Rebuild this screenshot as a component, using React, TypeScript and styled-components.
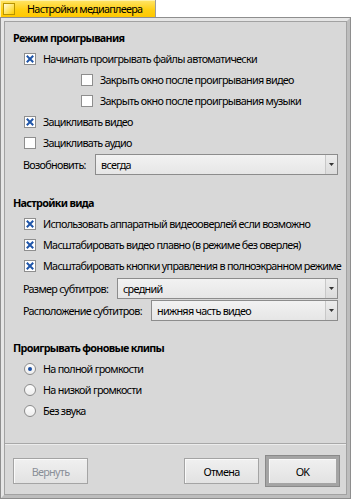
import React from 'react';
import styled, { createGlobalStyle } from 'styled-components';

const GlobalStyle = createGlobalStyle`
  html, body { margin: 0; padding: 0; background: #ffffff; }
  body { font-family: "Noto Sans", "DejaVu Sans", sans-serif; font-size: 10.8px; letter-spacing: -0.7px; color: #000; }
  * { box-sizing: border-box; }
`;

const Screen = styled.div`
  width: 351px;
  height: 499px;
  display: flex;
  flex-direction: column;
  overflow: hidden;
`;

const Tab = styled.div`
  width: 156px;
  height: 17px;
  flex: none;
  display: flex;
  align-items: center;
  gap: 12px;
  padding-left: 3px;
  background: linear-gradient(#ffe56a, #ffcf10 60%, #ffc800);
  border-right: 1px solid #9c9c9c;
  box-shadow: inset 1px 1px 0 #fff2a8;
`;

const CloseBox = styled.div`
  width: 12px;
  height: 12px;
  flex: none;
  border: 1px solid #b89400;
  background: linear-gradient(135deg, #fffbe0, #ffe66a 50%, #ffcf00);
`;

const TabTitle = styled.span`
  white-space: nowrap;
`;

const Window = styled.div`
  flex: 1;
  min-height: 0;
  min-width: 0;
  display: flex;
  border: 1px solid #8e8e8e;
`;

const Frame = styled.div`
  flex: 1;
  min-width: 0;
  display: flex;
  border-style: solid;
  border-width: 3px;
  border-color: #e6e6e6 #bdbdbd #bdbdbd #e6e6e6;
`;

const Content = styled.div`
  flex: 1;
  min-width: 0;
  display: flex;
  flex-direction: column;
  border: 1px solid #a2a2a2;
  background: #d8d8d8;
`;

const Main = styled.div`
  flex: 1;
  min-width: 0;
  display: flex;
  flex-direction: column;
  padding: 5px 8px 0 8px;
`;

const Section = styled.div<{ $top: number }>`
  display: flex;
  flex-direction: column;
  margin-top: ${(p) => p.$top}px;
`;

const Heading = styled.div`
  height: 21px;
  display: flex;
  align-items: center;
  font-weight: bold;
`;

const OptionRow = styled.label<{ $indent: number }>`
  height: 21px;
  display: flex;
  align-items: center;
  gap: 7px;
  padding-left: ${(p) => p.$indent}px;
  white-space: nowrap;
`;

const Box = styled.span`
  width: 12px;
  height: 12px;
  flex: none;
  display: flex;
`;

const SelectRow = styled.div<{ $top: number }>`
  height: 21px;
  display: flex;
  align-items: center;
  margin-top: ${(p) => p.$top}px;
  padding-left: 10px;
`;

const SelectLabel = styled.span<{ $width: number }>`
  width: ${(p) => p.$width}px;
  flex: none;
  white-space: nowrap;
`;

const Select = styled.div`
  flex: 1;
  min-width: 0;
  height: 21px;
  display: flex;
  border: 1px solid #8c8c8c;
  background: linear-gradient(#f2f2f2, #e6e6e6);
`;

const SelectValue = styled.span`
  flex: 1;
  display: flex;
  align-items: center;
  padding-left: 5px;
`;

const SelectArrow = styled.span`
  width: 12px;
  flex: none;
  display: flex;
  align-items: center;
  justify-content: center;
  border-left: 1px solid #c8c8c8;
  background: linear-gradient(#ececec, #dcdcdc);
`;

const Separator = styled.div`
  height: 2px;
  flex: none;
  border-top: 1px solid #a8a8a8;
  border-bottom: 1px solid #ececec;
`;

const Footer = styled.div`
  height: 49px;
  flex: none;
  display: flex;
  align-items: center;
  padding: 3px 6px 0 8px;
`;

const Spacer = styled.div`
  flex: 1;
`;

const Button = styled.div<{ $disabled?: boolean; $width?: number }>`
  width: ${(p) => p.$width ?? 75}px;
  height: 26px;
  flex: none;
  display: flex;
  align-items: center;
  justify-content: center;
  border: 1px solid #a4a4a4;
  background: linear-gradient(#f0f0f0, #e2e2e2);
  box-shadow: inset 1px 1px 0 #fafafa;
  color: ${(p) => (p.$disabled ? '#8a8f98' : '#000')};
`;

const DefaultFrame = styled.div`
  margin-left: 6px;
  padding: 2px;
  flex: none;
  border: 1px solid #8a8a8a;
  background: #a4a4a4;
  display: flex;
`;

const CheckBox = ({ checked }: { checked?: boolean }) => (
  <Box>
    <svg width="12" height="12" viewBox="0 0 12 12">
      <rect x="0.5" y="0.5" width="11" height="11" fill="#ffffff" stroke="#8e8e8e" />
      {checked && (
        <path d="M3.5 3.5 L8.5 8.5 M8.5 3.5 L3.5 8.5" stroke="#1f55a8" strokeWidth="2" strokeLinecap="square" />
      )}
    </svg>
  </Box>
);

const Radio = ({ checked }: { checked?: boolean }) => (
  <Box>
    <svg width="12" height="12" viewBox="0 0 12 12">
      <defs>
        <linearGradient id="rg" x1="0" y1="0" x2="0" y2="1">
          <stop offset="0" stopColor="#ffffff" />
          <stop offset="1" stopColor="#ececec" />
        </linearGradient>
      </defs>
      <circle cx="6" cy="6" r="5.5" fill="url(#rg)" stroke="#8a8a8a" />
      {checked && <circle cx="6" cy="6" r="2" fill="#1b4fa3" />}
    </svg>
  </Box>
);

const Arrow = () => (
  <svg width="5" height="3" viewBox="0 0 5 3">
    <path d="M0 0 H5 L2.5 3 Z" fill="#333" />
  </svg>
);

const Dropdown = ({ label, width, value, top }: { label: string; width: number; value: string; top: number }) => (
  <SelectRow $top={top}>
    <SelectLabel $width={width}>{label}</SelectLabel>
    <Select>
      <SelectValue>{value}</SelectValue>
      <SelectArrow>
        <Arrow />
      </SelectArrow>
    </Select>
  </SelectRow>
);

export default function App() {
  return (
    <Screen>
      <GlobalStyle />
      <Tab>
        <CloseBox />
        <TabTitle>Настройки медиаплеера</TabTitle>
      </Tab>
      <Window>
        <Frame>
          <Content>
            <Main>
              <Section $top={0}>
                <Heading>Режим проигрывания</Heading>
                <OptionRow $indent={11}>
                  <CheckBox checked />
                  Начинать проигрывать файлы автоматически
                </OptionRow>
                <OptionRow $indent={68}>
                  <CheckBox />
                  Закрыть окно после проигрывания видео
                </OptionRow>
                <OptionRow $indent={68}>
                  <CheckBox />
                  Закрыть окно после проигрывания музыки
                </OptionRow>
                <OptionRow $indent={11}>
                  <CheckBox checked />
                  Зацикливать видео
                </OptionRow>
                <OptionRow $indent={11}>
                  <CheckBox />
                  Зацикливать аудио
                </OptionRow>
                <Dropdown label="Возобновить:" width={72} value="всегда" top={1} />
              </Section>
              <Section $top={17}>
                <Heading>Настройки вида</Heading>
                <OptionRow $indent={11}>
                  <CheckBox checked />
                  Использовать аппаратный видеооверлей если возможно
                </OptionRow>
                <OptionRow $indent={11}>
                  <CheckBox checked />
                  Масштабировать видео плавно (в режиме без оверлея)
                </OptionRow>
                <OptionRow $indent={11}>
                  <CheckBox checked />
                  Масштабировать кнопки управления в полноэкранном режиме
                </OptionRow>
                <Dropdown label="Размер субтитров:" width={94} value="средний" top={2} />
                <Dropdown label="Расположение субтитров:" width={128} value="нижняя часть видео" top={1} />
              </Section>
              <Section $top={16}>
                <Heading>Проигрывать фоновые клипы</Heading>
                <OptionRow $indent={11}>
                  <Radio checked />
                  На полной громкости
                </OptionRow>
                <OptionRow $indent={11}>
                  <Radio />
                  На низкой громкости
                </OptionRow>
                <OptionRow $indent={11}>
                  <Radio />
                  Без звука
                </OptionRow>
              </Section>
            </Main>
            <Separator />
            <Footer>
              <Button $disabled>Вернуть</Button>
              <Spacer />
              <Button>Отмена</Button>
              <DefaultFrame>
                <Button $width={69}>OK</Button>
              </DefaultFrame>
            </Footer>
          </Content>
        </Frame>
      </Window>
    </Screen>
  );
}
